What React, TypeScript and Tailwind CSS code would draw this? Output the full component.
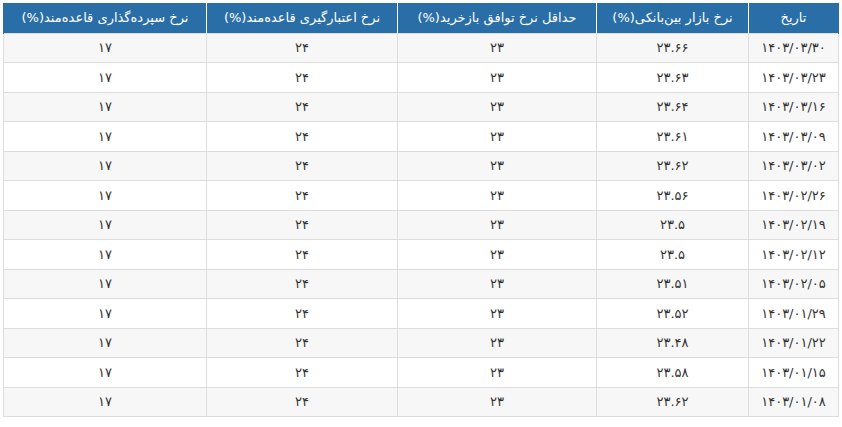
import React from 'react';

const rows: [string, string][] = [
  ['۱۴۰۳/۰۳/۳۰', '۲۳.۶۶'],
  ['۱۴۰۳/۰۳/۲۳', '۲۳.۶۳'],
  ['۱۴۰۳/۰۳/۱۶', '۲۳.۶۴'],
  ['۱۴۰۳/۰۳/۰۹', '۲۳.۶۱'],
  ['۱۴۰۳/۰۳/۰۲', '۲۳.۶۲'],
  ['۱۴۰۳/۰۲/۲۶', '۲۳.۵۶'],
  ['۱۴۰۳/۰۲/۱۹', '۲۳.۵'],
  ['۱۴۰۳/۰۲/۱۲', '۲۳.۵'],
  ['۱۴۰۳/۰۲/۰۵', '۲۳.۵۱'],
  ['۱۴۰۳/۰۱/۲۹', '۲۳.۵۲'],
  ['۱۴۰۳/۰۱/۲۲', '۲۳.۴۸'],
  ['۱۴۰۳/۰۱/۱۵', '۲۳.۵۸'],
  ['۱۴۰۳/۰۱/۰۸', '۲۳.۶۲'],
];

const headers = [
  { label: 'تاریخ', w: 'w-[90px]' },
  { label: 'نرخ بازار بین‌بانکی(%)', w: 'w-[152px]' },
  { label: 'حداقل نرخ توافق بازخرید(%)', w: 'w-[199px]' },
  { label: 'نرخ اعتبارگیری قاعده‌مند(%)', w: 'w-[191px]' },
  { label: 'نرخ سپرده‌گذاری قاعده‌مند(%)', w: 'w-[203px]' },
];

export default function App() {
  return (
    <div className="bg-white w-[842px] h-[427px] pt-[3px] pl-[3px] font-['DejaVu_Sans',sans-serif]">
      <table dir="rtl" className="w-[835px] table-fixed border-collapse text-[13px] text-[#333]">
        <thead>
          <tr className="h-[30px] bg-[#2a6ea7] text-white">
            {headers.map((h) => (
              <th key={h.label} className={`${h.w} border-x border-white font-normal text-center px-2 first:border-r-[#2a6ea7] last:border-l-[#2a6ea7]`}>
                {h.label}
              </th>
            ))}
          </tr>
        </thead>
        <tbody>
          {rows.map(([date, rate], i) => (
            <tr key={date} className={`h-[29.5px] ${i % 2 === 0 ? 'bg-[#f7f7f7]' : 'bg-white'}`}>
              <td className="border border-[#dddddd] text-center">{date}</td>
              <td className="border border-[#dddddd] text-center">{rate}</td>
              <td className="border border-[#dddddd] text-center">۲۳</td>
              <td className="border border-[#dddddd] text-center">۲۴</td>
              <td className="border border-[#dddddd] text-center">۱۷</td>
            </tr>
          ))}
        </tbody>
      </table>
    </div>
  );
}
